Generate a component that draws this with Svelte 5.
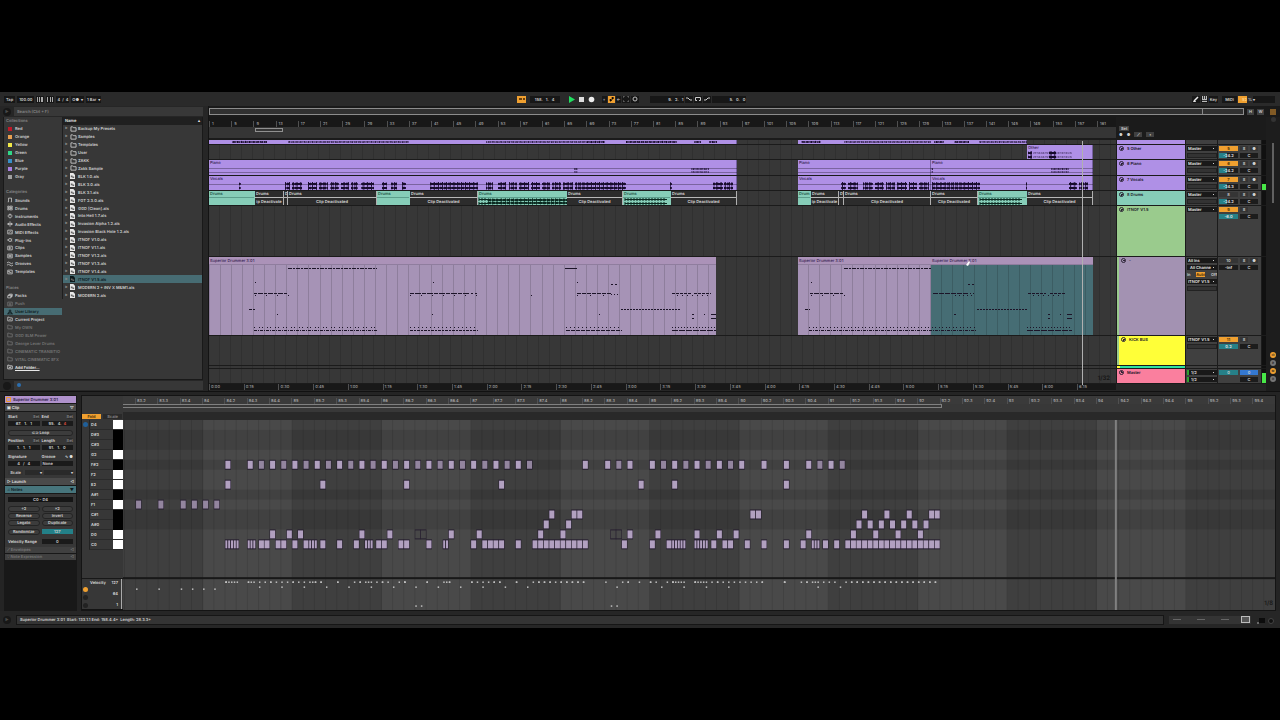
<script lang="ts">
  // Timeline geometry: the arrangement is 907 units wide, the note editor 1151
  const ARR = 907;
  const ROLL = 1151;
  const SIXTEENTH = 5.58;
  const BAR_84 = 80;

  const collections = [
    ['Red', '#c01828'], ['Orange', '#e8a050'], ['Yellow', '#f0e848'], ['Green', '#30d888'],
    ['Blue', '#3890c8'], ['Purple', '#a880e0'], ['Gray', '#a0a0a0']
  ];
  const categories = [
    ['Sounds', 'M2 6V1h4v5M2 6H1M6 6H5'],
    ['Drums', 'M1 1h2v2H1zM4 1h3v2H4zM1 4h2v2H1zM4 4h3v2H4z'],
    ['Instruments', 'M4 1a2.5 2.5 0 1 0 .1 0M4 1v3'],
    ['Audio Effects', 'M0 3.500h8M2 2v3M4 0v7M6 2v3'],
    ['MIDI Effects', 'M1 1h6v5H1zM2 5l3-3M5 4h1'],
    ['Plug-Ins', 'M2 3.500a2 2 0 1 0 4 0a2 2 0 1 0-4 0M0 3.500h2M6 2h1M6 5h1'],
    ['Clips', 'M1 1h6v5H1zM3 2v3l2-1.500z'],
    ['Samples', 'M1 1h6v5H1zM2 3h4M2 4h4'],
    ['Grooves', 'M0 2q2-2 4 0t4 0M0 5q2-2 4 0t4 0'],
    ['Templates', 'M1 1h6v5H1zM1 3h3M3 4h3']
  ];
  const FOLDER = 'M1 6V1h2l1 1h3v4z';
  const places = [
    { name: 'Packs', icon: 'M1 3h4v3H1zM2 3V2h4v3H5M3 2V1h4v3H6', kind: '' },
    { name: 'Push', icon: 'M1 1h6v5H1zM3 3h2v2H3z', kind: 'off' },
    { name: 'User Library', icon: 'M3 1h2v2H3zM2 6V4h4v2M0 6h8', kind: 'selected' },
    { name: 'Current Project', icon: FOLDER + 'M3 4h2', kind: '' },
    { name: 'My OWN', icon: FOLDER, kind: 'off' },
    { name: 'GGD SLM Power', icon: FOLDER, kind: 'off' },
    { name: 'George Lever Drums', icon: FOLDER, kind: 'off' },
    { name: 'CINEMATIC TRANSITIO', icon: FOLDER, kind: 'off' },
    { name: 'VITAL CINEMATIC SFX', icon: FOLDER, kind: 'off' },
    { name: 'Add Folder...', icon: FOLDER + 'M4 3v2M3 4h2', kind: 'link' }
  ];
  const files = [
    'Backup My Presets', 'Samples', 'Templates', 'User', 'ZAKK', 'Zakk Sample',
    'BLK 1.0.als', 'BLK 3.0.als', 'BLK 3.1.als', 'FGT 2.3.0.als', 'GGD [Clean].als',
    'Into Hell 1.7.als', 'Invasion Alpha 1.2.als', 'Invasion Black Hole 1.2.als',
    'ITNOF V1.0.als', 'ITNOF V1.1.als', 'ITNOF V1.2.als', 'ITNOF V1.3.als', 'ITNOF V1.4.als',
    'ITNOF V1.5.als', 'MODERN 2 + INV X M&M1.als', 'MODERN 2.als'
  ];

  const barMarks = Array.from({ length: 41 }, (_, i) => ({ text: 1 + i * 4, x: i * 22.2 }));
  const timeMarks = Array.from({ length: 26 }, (_, i) => ({
    text: `${Math.floor(i / 4)}:${String((i % 4) * 15).padStart(2, '0')}`,
    x: i * 34.72
  }));
  const beatMarks = Array.from({ length: 51 }, (_, i) => {
    const bar = 83 + Math.floor((i + 1) / 4);
    const beat = ((i + 1) % 4) + 1;
    return { text: beat === 1 ? `${bar}` : `${bar}.${beat}`, x: 12 + i * 22.33 };
  });

  // Clips are [start, end, label]
  const lilac = [[0, 528, ''], [589, 818, '']];
  const piano = [[0, 528, 'Piano'], [589, 722, 'Piano'], [722, 884, 'Piano']];
  const vocals = [[0, 528, 'Vocals'], [589, 722, 'Vocals'], [722, 884, 'Vocals']];
  const drums: [number, number, string][] = [
    [0, 46, 'on'], [46, 75, 'ip Deactivate'], [75, 79, ''], [79, 168, 'Clip Deactivated'],
    [168, 201, 'on'], [201, 269, 'Clip Deactivated'], [269, 358, 'on'],
    [358, 414, 'Clip Deactivated'], [414, 462, 'on'], [462, 528, 'Clip Deactivated'],
    [589, 602, 'on'], [602, 630, 'ip Deactivate'], [630, 635, ''],
    [635, 722, 'Clip Deactivated'], [722, 769, 'Clip Deactivated'], [769, 818, 'on'],
    [818, 884, 'Clip Deactivated']
  ];

  const tracks = [
    { id: 'top', name: '', h: 5, color: '#af90e6', clips: lilac, num: '', vol: '' },
    { id: 'other', name: '5 Other', h: 15, color: '#af90e6', clips: [[818, 884, 'Other']], num: '5', vol: '-24.2' },
    { id: 'piano', name: '6 Piano', h: 16, color: '#af90e6', clips: piano, num: '6', vol: '-24.2' },
    { id: 'vocals', name: '7 Vocals', h: 15, color: '#af90e6', clips: vocals, num: '7', vol: '-24.3' },
    { id: 'drums', name: '8 Drums', h: 15, color: '#86cdb8', clips: [], num: '8', vol: '-24.2' },
    { id: 'bus', name: 'ITNOF V1.5', h: 51, color: '#9acb8d', clips: [], num: '9', vol: '-6.0' },
    { id: 'midi', name: '-', h: 79, color: '#a392b2', clips: [], num: '10', vol: '-Inf' },
    { id: 'kick', name: 'KICK BUS', h: 30, color: '#ffff38', clips: [], num: '11', vol: '0.2' },
    { id: 'sliver', name: '', h: 3, color: '#30e0a0', clips: [], num: '', vol: '' },
    { id: 'master', name: 'Master', h: 15, color: '#fa7f9e', clips: [], num: '', vol: '' }
  ];

  // Deterministic jagged blocks that read as audio
  function wave(ranges: number[][], y: number, amp: number) {
    let d = '';
    for (const [a, b] of ranges) {
      for (let x = a; x < b; x += 1) {
        const v = amp * (0.65 + 0.35 * Math.sin(x * 2.3) * Math.cos(x * 0.7));
        d += `M${x + 0.5} ${(y - v).toFixed(1)}v${(v * 2).toFixed(1)}`;
      }
    }
    return d;
  }

  const vocalRanges = [
    [30, 32], [76, 81], [83, 93], [99, 108], [110, 119], [121, 130], [132, 140], [142, 149],
    [152, 165], [173, 178], [182, 188], [193, 197], [221, 269], [277, 284], [289, 297],
    [300, 308], [310, 320], [322, 331], [333, 341], [343, 352], [354, 364], [366, 417],
    [461, 463], [504, 514], [515, 524], [632, 637], [639, 649], [654, 664], [666, 675],
    [677, 686], [688, 698], [700, 708], [710, 720], [723, 771], [817, 818], [860, 868], [870, 879]
  ];
  const waves: Record<string, string> = {
    top: wave([[79, 200], [277, 378], [635, 722], [770, 818]], 2, 0.8) +
      wave([[23, 58], [378, 396], [417, 468], [485, 492], [500, 508], [592, 612], [725, 735], [745, 760]], 2, 1.1),
    other: wave([[819, 823], [840, 847]], 8, 2) + wave([[819, 823], [840, 847]], 12, 2) +
      wave([[824, 863]], 8, 0.4) + wave([[824, 863]], 12, 0.4),
    piano: wave([[365, 369], [482, 500], [722, 724], [842, 860]], 9, 0.8) +
      wave([[365, 369], [482, 500], [722, 724], [842, 860]], 12, 0.6),
    vocals: wave(vocalRanges, 8, 2) + wave(vocalRanges, 12, 1.9),
    drums: wave([[278, 358]], 9, 1.7) + wave([[278, 358]], 12, 1.7)
  };
  let hits = '';
  for (const [a, b] of [[270, 278], [416, 456], [771, 812]]) {
    for (let x = a; x < b; x += 3) hits += `M${x} 7v3M${x} 11v3M${x} 8.500h3M${x} 12.500h3`;
  }
  waves.drums += hits;

  // Lines between the two channels of a stereo clip
  const channelLines: Record<string, string> = {
    piano: 'M0 8.500H528M589 8.500H884M0 12.500H528M589 12.500H884',
    vocals: 'M0 8.500H528M589 8.500H884'
  };

  // MIDI miniatures: [from, to, y, dash]
  const midiLines: [number, number, number, string][] = [
    [79, 168, 11, '4 1 2 1'], [356, 368, 11, '4 0'], [46, 47, 25, ''], [224, 225, 25, ''], [368, 369, 25, ''],
    [402, 410, 27, '2 2'], [45, 79, 36, '3 1 5 1'], [201, 258, 36, '4 1 6 1'], [258, 268, 36, '2 2'],
    [368, 402, 36, '4 1'], [402, 410, 37, '1 2'], [46, 80, 38, '1 10'], [201, 269, 38, '1 10'],
    [368, 402, 38, '1 12'], [322, 323, 38, ''], [40, 46, 52, '3 1'], [412, 472, 52, '2 1'],
    [68, 69, 57, ''], [223, 224, 57, ''], [390, 391, 57, ''], [45, 168, 70, '1 4 1 2'],
    [45, 168, 73, '3 1 1 1'], [201, 269, 70, '1 3'], [201, 269, 73, '3 1 2 1'], [357, 413, 70, '1 3'],
    [357, 413, 73, '4 1'], [463, 482, 36, '3 1'], [485, 502, 36, '3 1'], [468, 500, 38, '1 4'],
    [483, 485, 57, ''], [495, 496, 57, ''], [502, 507, 57, ''], [483, 485, 61, ''], [502, 507, 61, ''],
    [463, 507, 70, '1 2'], [463, 507, 73, '6 1'],
    [596, 601, 52, '3 1'], [602, 603, 25, ''], [601, 635, 36, '3 1 5 1'], [602, 636, 38, '1 10'],
    [635, 722, 11, '4 1 2 1'], [600, 768, 70, '1 3 1 2'], [600, 768, 73, '3 1 1 1'],
    [724, 758, 36, '5 1'], [758, 766, 36, '1 2'], [759, 766, 27, '2 2'], [746, 764, 38, '1 3'],
    [745, 747, 57, ''], [768, 818, 52, '2 1'], [819, 837, 36, '3 1'], [841, 857, 36, '3 1'],
    [824, 854, 38, '1 4'], [839, 841, 57, ''], [851, 852, 57, ''], [858, 863, 57, ''],
    [839, 841, 61, ''], [858, 863, 61, ''], [818, 863, 70, '1 2'], [818, 863, 73, '6 1']
  ];
  const midiBars = Array.from({ length: 81 }, (_, i) => i * 11.1).filter((x) => x < 507 || (x > 589 && x < 884));

  const keys = [
    ['D4', 0], ['D#3', 1], ['C#3', 1], ['G2', 0], ['F#2', 1], ['F2', 0], ['E2', 0],
    ['A#1', 1], ['F1', 0], ['C#1', 1], ['A#0', 1], ['D0', 0], ['C0', 0]
  ] as [string, number][];

  function span(a: number, b: number, step = 1) {
    const out: number[] = [];
    for (let i = a; i <= b; i += step) out.push(i);
    return out;
  }

  // Note starts per row, in sixteenths counted from bar 84
  const rows: Record<number, number[]> = {
    4: [4, ...span(8, 58, 2), 68, 72, 74, 76, ...span(80, 96, 2), 100, 104, 108, 110, 112, 114],
    6: [4, 21, 36, 53, 78, 84, 104],
    8: [-12, -8, -4, -2, 0, 2],
    9: [62, 66, 67, 98, 99, 118, 122, 126, 130, 131],
    10: [61, 65, 117, 119, 121, 123, 125, 127, 129],
    11: [12, 15, 17, 28, 33, 38, 39, 44, 49, 60, 64, 73, 74, 76, 81, 88, 92, 95, 108, 116, 120, 124, 128],
    12: [10, 11, 13, 14, 16, 18, 21, 24, 27, 31, 32, 35, 36, 40, 48, 50, 51, 52, 53, 56,
      ...span(59, 68), 75, 80, 83, 91, 93, 94, 97, 100, 104, 107, 111, 113, ...span(115, 131)]
  };
  const short = [
    ...span(4, 6, 0.5), 8, 8.5, 9, 19, 19.5, 20, 29, 29.5, 30, 43, 43.5,
    ...span(84, 86, 0.5), ...span(88, 90, 0.5), 109, 109.5, 110
  ];
  const notes = [
    ...Object.entries(rows).flatMap(([row, list]) =>
      list.map((at) => {
        const r = Number(row);
        const ghost = r === 11 && [38, 39, 73, 74].includes(at);
        const soft = r === 8 || (r === 4 && at % 4 === 2);
        return { row: r, x: BAR_84 + at * SIXTEENTH, w: 5, fill: ghost ? '#484848' : soft ? '#93859f' : '#b1a0c0', vel: ghost ? 187 : r === 8 ? 170 : soft ? 168 : 163 };
      })
    ),
    ...short.map((at) => ({ row: 12, x: BAR_84 + at * SIXTEENTH, w: 2, fill: '#b1a0c0', vel: 163 }))
  ];
  const rollBars = Array.from({ length: 13 }, (_, i) => ({
    x: Math.max(0, BAR_84 + (i - 1) * 89.3),
    w: i === 0 ? 80 : 89.3,
    light: i % 2 === 1
  }));
  const gridLines = Array.from({ length: 103 }, (_, i) => 1.5 + i * 11.16);

  let playing = $state(true);
  let search = $state('');
  let selectedFile = $state('ITNOF V1.5.als');

  const pct = (v: number, total: number) => `${(v / total) * 100}%`;
</script>

<div class="screen">
  <main class="window">
    <header class="transport">
      <div class="group left">
        <button>Tap</button><span class="field">100.00</span>
        <button aria-label="Nudge down"><svg width="6" height="5"><path d="M0 0h1v5H0zM2 0h1v5H2zM4 0h2v5H4z" fill="#aaa" /></svg></button>
        <button aria-label="Nudge up"><svg width="6" height="5"><path d="M0 0h1v5H0zM3 0h1v5H3zM5 0h1v5H5z" fill="#aaa" /></svg></button>
        <span class="field">4 &nbsp;/&nbsp; 4</span>
        <button>O●&nbsp; ▾</button><button>1 Bar &nbsp;▾</button>
      </div>
      <div class="group centre">
        <button class="amber" aria-label="Follow"><svg width="7" height="6"><path d="M1 3h3M5 3h2" stroke="#402000" stroke-width="1.500" /></svg></button>
        <span class="field pos">158. &nbsp; 1. &nbsp; 4</span>
        <button class="big" aria-label="Play" onclick={() => (playing = !playing)}>
          <svg width="7" height="7"><path d="M1 0l6 3.500L1 7z" fill={playing ? '#20e060' : '#ddd'} /></svg>
        </button>
        <button class="big" aria-label="Stop"><svg width="7" height="7"><path d="M1 1h5v5H1z" fill="#ddd" /></svg></button>
        <button class="big" aria-label="Record"><svg width="7" height="7"><circle cx="3.500" cy="3.500" r="2.800" fill="#eee" /></svg></button>
        <button class="tools" aria-label="Overdub">+</button>
        <button class="amber arm" aria-label="Automation arm"><svg width="5" height="6"><path d="M1 5h1l2-3h1" stroke="#402000" fill="none" /><circle cx="1.500" cy="4" r="1" /><circle cx="3.500" cy="2" r="1" /></svg></button>
        <button aria-label="Re-enable">←</button>
        <button aria-label="Capture"><svg width="6" height="6"><path d="M0 2V0h2M4 0h2v2M6 4v2H4M2 6H0V4" stroke="#777" fill="none" /></svg></button>
        <button aria-label="Session record"><svg width="6" height="6"><circle cx="3" cy="3" r="2" stroke="#bbb" fill="none" /></svg></button>
        <span class="field loop">9. &nbsp; 2. &nbsp; 1</span>
        <button aria-label="Punch in"><svg width="6" height="6"><path d="M0 2h2l2 2h2" stroke="#ccc" fill="none" /></svg></button>
        <button aria-label="Loop"><svg width="6" height="6"><path d="M2 4.500H.500v-3h5v3H4" stroke="#ccc" fill="none" /></svg></button>
        <button aria-label="Punch out"><svg width="6" height="6"><path d="M0 4h2l2-2h2" stroke="#ccc" fill="none" /></svg></button>
        <span class="field len">5. &nbsp; 0. &nbsp; 0</span>
      </div>
      <div class="group right">
        <button aria-label="Draw mode"><svg width="6" height="6"><path d="M1 5l4-4M0 6h3" stroke="#eee" stroke-width="1.500" /></svg></button>
        <button aria-label="Computer keyboard"><svg width="5" height="6"><path d="M0 0h5v6H0z" fill="#bbb" /><path d="M1.500 0v3M3.500 0v3M0 4.500h5" stroke="#333" /></svg></button>
        <button>Key</button><button class="midimap">MIDI</button>
        <span class="cpu">52</span><span>%</span><span class="disk">▾</span>
      </div>
    </header>

    <div class="upper">
      <aside class="browser">
        <div class="searchrow">
          <button class="round" aria-label="Preview">▶</button>
          <input type="text" bind:value={search} aria-label="Search" placeholder="Search (Ctrl + F)" />
        </div>
        <div class="panes">
          <nav class="sidebar">
            <h2>Collections</h2>
            {#each collections as [name, color]}
              <button><i class="swatch" style="background:{color}"></i>{name}</button>
            {/each}
            <span></span>
            <h2>Categories</h2>
            {#each categories as [name, d]}
              <button><svg class="ico" viewBox="0 0 8 7"><path {d} /></svg>{name}</button>
            {/each}
            <span></span>
            <h2>Places</h2>
            {#each places as place}
              <button class={place.kind}><svg class="ico" viewBox="0 0 8 7"><path d={place.icon} /></svg>{place.name}</button>
            {/each}
          </nav>
          <div class="files">
            <div class="filehead"><span>Name</span><span class="sort">▴</span></div>
            {#each files as file, i}
              <button class:selected={file === selectedFile} onclick={() => (selectedFile = file)}>
                <span class="tri">▶</span>
                {#if i < 6}
                  <svg class="ico folder" viewBox="0 0 8 7"><path d={FOLDER} /></svg>
                {:else}
                  <svg class="doc" viewBox="0 0 6 7"><path d="M0 0h4l2 2v5H0z" /><path class="ink" d="M1 3h2v1h2v2H3V5H1z" /></svg>
                {/if}
                {file}
              </button>
            {/each}
          </div>
        </div>
        <div class="browserfoot"><span class="round"></span><div><i></i></div></div>
      </aside>

      <section class="arrangement">
        <div class="overview">
          <div class="map"><i></i></div>
          <button>H</button><button>W</button>
          <svg class="burger" width="6" height="6"><path d="M0 1h6M0 3h6M0 5h6" stroke="#e89a30" /></svg>
        </div>
        <div class="body">
          <div class="tracks">
            <div class="row heading">
              <div class="rulers">
                <div class="ruler">
                  {#each barMarks as m}<span style="left:{pct(m.x, ARR)}">{m.text}</span>{/each}
                </div>
                <div class="loopzone"><i></i></div>
              </div>
              <div class="setbox">
                <button>Set</button>
                <div><span>●</span><span>●</span><button aria-label="Automation mode">⟋</button><button aria-label="Lock">▪</button></div>
              </div>
            </div>

            {#each tracks as t}
              <div class="row {t.id}" style="height:{t.h}px">
                <div class="lane">
                  {#each t.clips as [a, b, label]}
                    <div class="clip" style="left:{pct(Number(a), ARR)};width:{pct(Number(b) - Number(a), ARR)};background:{t.color}">{label}</div>
                  {/each}
                  {#if t.id === 'drums'}
                    {#each drums as [a, b, label]}
                      <div class="clip drum" class:on={label === 'on'} style="left:{pct(a, ARR)};width:{pct(b - a, ARR)}">
                        <span>{b - a < 6 ? 'D' : b - a < 15 ? 'Drum' : 'Drums'}</span>
                        <p>{label === 'on' ? '' : label}</p>
                      </div>
                    {/each}
                  {/if}
                  {#if t.id === 'midi'}
                    <div class="clip part" style="left:0;width:{pct(507, ARR)}"><span>Superior Drummer 3:01</span></div>
                    <div class="clip part" style="left:{pct(589, ARR)};width:{pct(133, ARR)}"><span>Superior Drummer 3:01</span></div>
                    <div class="clip part picked" style="left:{pct(722, ARR)};width:{pct(162, ARR)}"><span>Superior Drummer 3:01</span></div>
                    <svg class="over crisp" viewBox="0 0 {ARR} 78" preserveAspectRatio="none">
                      {#each midiBars as x}<path d="M{x} 8V78" stroke="#000" stroke-opacity=".14" />{/each}
                      {#each midiLines as [a, b, y, dash]}
                        <path d="M{a} {y + 0.5}H{b}" stroke="#1c1428" stroke-dasharray={dash || null} />
                      {/each}
                    </svg>
                    <svg class="cursor" width="6" height="7"><path d="M1 5l3-4 1 1-2 4z" fill="#fff" /></svg>
                  {/if}
                  {#if waves[t.id]}
                    <svg class="over" viewBox="0 0 {ARR} {t.h - 1}" preserveAspectRatio="none">
                      <path d={channelLines[t.id] ?? ''} stroke="#000" stroke-opacity=".3" />
                      <path d={waves[t.id]} stroke={t.id === 'drums' ? '#0a2a20' : '#180c2c'} />
                    </svg>
                  {/if}
                  {#if t.id === 'master'}<em>1/32</em>{/if}
                </div>
                <div class="head" style="background:{t.color}">
                  {#if t.name}<button class="fold" aria-label="Fold {t.name}"></button>{t.name}{/if}
                </div>
                <div class="io">
                  {#if t.id === 'master'}
                    <select aria-label="Cue out"><option>1/2</option></select>
                    <select aria-label="Master out"><option>1/2</option></select>
                  {:else if t.id === 'midi'}
                    <select aria-label="MIDI from"><option>All Ins</option></select>
                    <select aria-label="MIDI channel"><option>&nbsp; All Channe</option></select>
                    <div class="monitor"><button>In</button><button class="amber">Auto</button><button>Off</button></div>
                    <select aria-label="MIDI to"><option>ITNOF V1.5</option></select>
                    <div class="blank"></div>
                  {:else if t.name}
                    <select aria-label="Output of {t.name}"><option>{t.id === 'kick' ? 'ITNOF V1.5' : 'Master'}</option></select>
                    {#if t.id !== 'bus'}<div class="blank"></div>{/if}
                  {/if}
                </div>
                <div class="mix">
                  {#if t.num}
                    <button class="num" class:amber={t.num !== '8' && t.num !== '10'}>{t.num}</button>
                    <button>S</button>
                    {#if t.id !== 'bus' && t.id !== 'kick'}<button aria-label="Arm {t.name}">●</button>{:else}<i></i>{/if}
                    <span class="vol" class:full={t.id === 'kick' || t.id === 'bus'} class:none={t.id === 'midi'}>{t.vol}</span>
                    <span class="pan">C</span>
                  {:else if t.id === 'master'}
                    <button class="num cue">0</button><button class="wide">0</button>
                    <i></i><span class="pan">C</span>
                  {/if}
                </div>
                <div class="meter"></div>
              </div>
            {/each}

            <div class="times">
              {#each timeMarks as m}<span style="left:{pct(m.x, ARR)}">{m.text}</span>{/each}
            </div>
            <div class="playline"><i></i></div>
          </div>
          <div class="gutter">
            <i class="info"></i>
            <i class="scroll"></i>
            <span class="dot lit">IO</span><span class="dot">R</span><span class="dot lit">M</span><span class="dot">D</span>
          </div>
        </div>
      </section>
    </div>

    <div class="lower">
      <aside class="clipview">
        <div class="cliptitle"><i></i>Superior Drummer 3:01</div>
        <h3><span>▣ Clip</span><span>▽</span></h3>
        <div class="props">
          <div class="pair"><span>Start <button>Set</button></span><span>End <button>Set</button></span></div>
          <div class="pair dark"><b>67. &nbsp; 1. &nbsp; 1</b><b>95. &nbsp; 4. &nbsp;<u>4</u></b></div>
          <button class="pill gap">⊂⊃ Loop</button>
          <div class="pair"><span>Position <button>Set</button></span><span>Length <button>Set</button></span></div>
          <div class="pair dark"><b>1. &nbsp; 1. &nbsp; 1</b><b>91. &nbsp; 1. &nbsp; 0</b></div>
          <div class="pair sig"><span>Signature</span><span>Groove <em>∿ ●</em></span></div>
          <div class="pair dark"><b>4 &nbsp; / &nbsp; 4</b><b class="l">None</b></div>
          <div class="scale"><button>Scale</button><b>▾</b><b>▾</b></div>
        </div>
        <h3><span>▷ Launch</span><span>◁</span></h3>
        <h3 class="teal"><span>♫ Notes</span><span>▼</span></h3>
        <div class="props notesbox">
          <b class="rangebox">C0 - D4</b>
          <div class="pair"><button class="pill">÷2</button><button class="pill">×2</button></div>
          <div class="pair"><button class="pill">Reverse</button><button class="pill">Invert</button></div>
          <div class="pair"><button class="pill">Legato</button><button class="pill">Duplicate</button></div>
          <div class="pair rand"><button class="pill">Randomize</button><b class="amount">127</b></div>
          <div class="pair vr"><span>Velocity Range</span><b>0</b></div>
        </div>
        <h3 class="off"><span>⟋ Envelopes</span><span>◁</span></h3>
        <h3 class="off"><span>∵ Note Expression</span><span>◁</span></h3>
      </aside>

      <section class="editor">
        <div class="keys">
          <div class="foldrow"><button class="amber">Fold</button><button>Scale</button></div>
          {#each keys as [name, black]}
            <div class="key"><span>{name}</span><i class:black></i></div>
          {/each}
          <div class="velhead"><span>Velocity</span><p><b>127</b><b>64</b><b>1</b></p></div>
          <i class="ear"></i>
          <i class="lane1"></i>
        </div>
        <div class="roll">
          <div class="beats">
            {#each beatMarks as m}<span style="left:{pct(m.x, ROLL)}">{m.text}</span>{/each}
          </div>
          <div class="looprail"><i></i></div>
          <div class="startrail"></div>
          <div class="scrub"></div>
          <svg class="notes" viewBox="0 0 {ROLL} 191" preserveAspectRatio="none">
            <rect width={ROLL} height="191" fill="#3f3f3f" />
            {#each rollBars as bar}
              <rect x={bar.x} width={bar.w} height="191" fill={bar.light ? '#494949' : '#3f3f3f'} />
            {/each}
            {#each keys as [, black], i}
              {#if black}<rect y={i * 10} width={ROLL} height="10" fill="#000" opacity=".1" />{/if}
            {/each}
            {#each gridLines as x}<path d="M{x} 0V191" stroke="#000" stroke-opacity=".1" />{/each}
            <rect y="158" width={ROLL} height="2" fill="#181818" />
            {#each notes as n}
              <rect x={n.x - 0.5} y={n.row * 10} width={n.w + 1} height="10" fill="#251d2e" />
              <rect x={n.x} y={n.row * 10 + 1} width={n.w} height="8" fill={n.fill} />
              <rect x={n.x} y={n.vel - 0.7} width="1.500" height="1.500" fill="#c0c0c0" />
            {/each}
            <rect x="991" width="2" height="191" fill="#808080" />
          </svg>
          <em>1/8</em>
        </div>
      </section>
    </div>

    <footer class="status">
      <span class="round">▶</span>
      <p>Superior Drummer 3:01 &nbsp;Start: 133.1.1 End: 158.4.4+ &nbsp;Length: 28.3.3+</p>
      <div class="chain"><i></i><i></i><i></i><i class="here"></i></div>
      <svg width="20" height="10"><path d="M3 3h6v5H3z" fill="#0c0c0c" /><path d="M1 8h2" stroke="#aaa" /><circle cx="15" cy="6" r="2.500" fill="#111" stroke="#444" /></svg>
    </footer>
  </main>
</div>

<style>
  :global(body) {
    background: #000;
  }

  .screen {
    display: flex;
    flex-direction: column;
    justify-content: center;
    min-height: 100vh;
    font: 600 4px/8px Inter, "Noto Sans", sans-serif;
    text-rendering: geometricPrecision;
    color: #d0d0d0;
  }

  .window {
    background: #272727;
    overflow: hidden;
  }

  button, input, select {
    font: inherit;
    color: inherit;
    background: none;
    border: 0;
    border-radius: 0;
    margin: 0;
    padding: 0;
    min-width: 0;
    appearance: none;
    text-align: inherit;
    text-rendering: inherit;
    white-space: nowrap;
  }

  h2, h3, p {
    margin: 0;
    font: inherit;
  }

  i, em, b, u {
    display: block;
    font-style: normal;
    font-weight: inherit;
    text-decoration: none;
  }

  svg {
    display: block;
  }

  .amber {
    background: #f0a030 !important;
    color: #3a2400 !important;
  }

  /* transport */
  .transport {
    display: grid;
    grid-template-columns: 1fr auto 1fr;
    align-items: center;
    height: 14px;
    padding: 0 5px 0 4px;
    background: #2a2a2a;
  }

  .group {
    display: flex;
    align-items: center;
    gap: 1px;
    line-height: 7px;
  }

  .group button, .group .field {
    display: flex;
    align-items: center;
    justify-content: center;
    height: 7px;
    padding: 0 1px;
    background: #171717;
  }

  .left {
    gap: 2px;
  }

  .left > :first-child, .left > :nth-child(2) {
    padding: 0 2px;
  }

  .centre {
    padding-right: 16px;
  }

  .centre .pos {
    width: 28px;
    margin: 0 6px 0 3px;
  }

  .centre .big {
    background: none;
  }

  .centre .tools {
    width: 5px;
    margin-left: 5px;
  }

  .centre .loop {
    width: 32px;
    margin-left: 10px;
    justify-content: flex-end;
  }

  .centre .len {
    width: 32px;
    justify-content: flex-end;
  }

  .right {
    justify-content: flex-end;
  }

  .right .midimap {
    margin-left: 3px;
    padding: 0 3px;
  }

  .cpu {
    width: 9px;
    text-align: right;
    background: #f0a030;
    color: #ffd890;
  }

  .disk {
    width: 22px;
    background: #171717;
    text-align: left;
  }

  .round {
    display: block;
    width: 8px;
    height: 8px;
    line-height: 8px;
    border-radius: 50%;
    background: #181818;
    color: #4a4a4a;
    text-align: center;
    flex: none;
  }

  /* browser */
  .upper {
    display: flex;
    height: 285px;
    background: #262626;
    border-bottom: 1px solid #111;
  }

  .browser {
    width: 200px;
    margin: 0 5px 0 3px;
    flex: none;
    display: flex;
    flex-direction: column;
  }

  .searchrow, .browserfoot {
    display: flex;
    gap: 3px;
    align-items: center;
    height: 11px;
  }

  .searchrow input {
    flex: 1;
    height: 9px;
    padding-left: 3px;
    background: #383838;
    color: #888;
  }

  .searchrow input::placeholder {
    color: #888;
  }

  .panes {
    display: flex;
    flex: 1;
    border: 1px solid #191919;
    border-top: 0;
    background: #373737;
  }

  .sidebar {
    width: 58px;
    height: 254px;
    flex: none;
    display: grid;
    grid-auto-rows: 1fr;
    overflow: hidden;
  }

  .sidebar h2 {
    padding-left: 2px;
    color: #858585;
  }

  .sidebar button {
    display: flex;
    align-items: center;
    gap: 2px;
    padding-left: 3px;
    min-height: 0;
    overflow: hidden;
    line-height: 7px;
  }

  .ico {
    width: 6px;
    height: 6px;
    flex: none;
    fill: none;
    stroke: currentColor;
  }

  .swatch {
    width: 4px;
    height: 4px;
    margin: 0 1px;
  }

  .sidebar .off {
    color: #767676;
  }

  .sidebar .selected, .files .selected {
    background: #476c73;
    color: #0b181b;
  }

  .sidebar .link {
    text-decoration: underline;
    color: #e8e8e8;
  }

  .files {
    flex: 1;
    height: 182px;
    border-left: 1px solid #1e1e1e;
    display: grid;
    grid-auto-rows: 1fr;
  }

  .filehead {
    display: flex;
    justify-content: space-between;
    padding: 0 2px;
    background: #202020;
    color: #e8e8e8;
  }

  .files button {
    display: flex;
    align-items: center;
    min-height: 0;
    line-height: 7px;
    padding-left: 2px;
  }

  .tri {
    width: 5px;
    font-size: 3px;
    color: #888;
  }

  .folder {
    width: 7px;
    margin-right: 1px;
  }

  .doc {
    width: 5px;
    height: 6px;
    margin-right: 3px;
    fill: #e8e8e8;
  }

  .doc .ink {
    fill: #666;
  }

  .selected .doc {
    fill: #0b181b;
  }

  .browserfoot div {
    flex: 1;
    height: 9px;
    background: #373737;
  }

  .browserfoot i {
    width: 4px;
    height: 4px;
    margin: 2px 3px;
    border-radius: 50%;
    background: #2c6fb0;
  }

  /* arrangement */
  .arrangement {
    flex: 1;
    min-width: 0;
    display: flex;
    flex-direction: column;
    border-left: 1px solid #141414;
  }

  .overview {
    display: flex;
    align-items: center;
    gap: 3px;
    height: 11px;
    padding-right: 4px;
    background: #1a1a1a;
  }

  .map {
    flex: 1;
    height: 5px;
    border: 1px solid #8c8c8c;
    background: #303030;
  }

  .map i {
    width: 96%;
    height: 5px;
    border-right: 1px solid #888;
  }

  .overview button {
    width: 7px;
    height: 6px;
    line-height: 6px;
    text-align: center;
    background: #404040;
  }

  .burger {
    margin-left: 3px;
  }

  .body {
    display: flex;
    flex: 1;
  }

  .tracks {
    position: relative;
    flex: 1;
    min-width: 0;
  }

  .row {
    display: grid;
    grid-template-columns: 1fr 68px 31px 43px 4px;
    column-gap: 1px;
    background: #1b1b1b;
  }

  .row > * {
    margin-bottom: 1px;
    min-height: 0;
    overflow: hidden;
  }

  .rulers {
    height: 21px;
    background: #353535;
    border-bottom: 1px solid #1b1b1b;
  }

  .ruler, .times, .beats {
    position: relative;
    height: 10px;
    background: #181818;
    color: #a0a0a0;
    font-weight: 500;
  }

  .ruler span, .times span, .beats span {
    position: absolute;
    top: 4px;
    padding-left: 2px;
    line-height: 6px;
    border-left: 1px solid #505050;
  }

  .loopzone i {
    width: 26px;
    height: 2px;
    margin: 1px 0 0 5.100%;
    border: 1px solid #909090;
  }

  .setbox {
    grid-column: 2 / -1;
    padding: 9px 0 0 2px;
    line-height: 5px;
    background: #1b1b1b;
  }

  .setbox button {
    display: block;
    padding: 0 2px;
    background: #404040;
    text-align: center;
    line-height: 5px;
  }

  .setbox div {
    display: flex;
    gap: 4px;
    margin-top: 1px;
  }

  .setbox div button {
    width: 8px;
  }

  .lane {
    position: relative;
    background: #373737 repeating-linear-gradient(90deg, transparent 0 10px, #303030 10px 11px);
  }

  .clip {
    position: absolute;
    top: 0;
    bottom: 0;
    box-sizing: border-box;
    padding-left: 1px;
    line-height: 6px;
    font-weight: 500;
    color: #35204f;
    border-right: 1px solid #7460a0;
    white-space: nowrap;
    overflow: hidden;
  }

  .over {
    position: absolute;
    inset: 0;
    width: 100%;
    height: 100%;
  }

  .crisp {
    shape-rendering: crispEdges;
  }

  .drum {
    padding: 0;
    background: #2c2c2c;
    color: #ddd;
    border-right: 1px solid #b0b0b0;
    text-align: center;
    line-height: 7px;
    font-weight: 600;
  }

  .drum span {
    display: block;
    height: 6px;
    line-height: 6px;
    padding-left: 1px;
    text-align: left;
    border-bottom: 1px solid #b8b8b8;
  }

  .drum.on {
    background: #86cdb8;
    color: #205545;
    border-color: #86cdb8;
  }

  .drum.on span {
    border-color: #5c9e8c;
  }

  .part {
    padding: 0;
    background: #a693b6;
    border: 0;
  }

  .part span {
    display: block;
    height: 7px;
    padding-left: 1px;
    line-height: 7px;
    background: #ab92b8;
    border-bottom: 1px solid #8f7d9e;
  }

  .picked {
    background: #466d74;
  }

  .cursor {
    position: absolute;
    left: 83.300%;
    top: 3px;
  }

  .master em {
    position: absolute;
    right: 6px;
    bottom: 0;
    color: #151515;
    font-size: 6px;
  }

  .head {
    display: flex;
    align-items: flex-start;
    gap: 3px;
    padding-left: 2px;
    line-height: 7px;
    color: #17121e;
    font-weight: 600;
  }

  .midi .head, .kick .head {
    border-left: 2px solid #9acb8d;
  }

  .sliver .head {
    border-left: 3px solid #ffff38;
  }

  .fold {
    flex: none;
    width: 5px;
    height: 5px;
    margin-top: 1px;
    box-sizing: border-box;
    border: 1px solid #2a2233;
    border-radius: 50%;
    background: radial-gradient(#2a2233 1px, transparent 1px);
  }

  .io {
    padding: 1px 0 0 1px;
    background: #404040;
    display: flex;
    flex-direction: column;
    gap: 2px;
  }

  .io select {
    flex: none;
    height: 5px;
    line-height: 5px;
    padding-left: 1px;
    color: #e4e4e4;
    background: #191919 linear-gradient(135deg, #ccc 50%, transparent 50%) no-repeat 26px 2px / 2px 2px;
  }

  .master .io select {
    padding-left: 4px;
    box-shadow: inset 2px 0 0 #30a030;
  }

  .blank {
    flex: none;
    height: 3px;
    border: 1px solid #222;
    background: #333;
  }

  .monitor {
    display: flex;
    justify-content: space-between;
    height: 5px;
    line-height: 5px;
  }

  .monitor button {
    line-height: 5px;
  }

  .mix {
    display: grid;
    grid-template-columns: 19px 8px 8px;
    grid-auto-rows: 5px;
    gap: 2px;
    padding: 1px 0 0 1px;
    justify-content: start;
    background: #404040;
    line-height: 5px;
    text-align: center;
  }

  .mix button {
    line-height: 5px;
    text-align: center;
    background: #353535;
  }

  .vol {
    background: linear-gradient(90deg, #268088 40%, #1c1c1c 40%);
    color: #e8e8e8;
  }

  .vol.full {
    background: #268088;
  }

  .vol.none {
    background: #1c1c1c;
  }

  .mix .pan {
    grid-column: 2 / 4;
    background: #1c1c1c;
  }

  .mix .cue {
    background: #268088;
  }

  .mix .wide {
    grid-column: 2 / 4;
    background: #3478d0;
  }

  .meter {
    background: #101010;
  }

  .vocals .meter {
    background: linear-gradient(#101010 55%, #48e848 55%);
  }

  .master .meter {
    background: linear-gradient(#101010 30%, #48e848 30%);
  }

  .times {
    height: 6px;
    margin-right: 150px;
  }

  .times span {
    top: 0;
    line-height: 6px;
    padding-left: 1px;
  }

  .playline {
    position: absolute;
    inset: 24px 150px 6px 0;
    pointer-events: none;
  }

  .playline i {
    width: 1px;
    height: 100%;
    margin-left: 96.300%;
    background: #b0b0b0;
  }

  .gutter {
    width: 14px;
    flex: none;
    display: flex;
    flex-direction: column;
    align-items: center;
    gap: 1px;
    background: #1d1d1d;
  }

  .info {
    width: 5px;
    height: 5px;
    margin-bottom: 20px;
    border-radius: 50%;
    background: #333;
  }

  .scroll {
    width: 2px;
    height: 60px;
    margin-bottom: auto;
    background: #606060;
  }

  .dot {
    width: 6px;
    height: 6px;
    margin-bottom: 1px;
    border-radius: 50%;
    background: #777;
    color: #222;
    font-size: 3px;
    line-height: 6px;
    text-align: center;
  }

  .dot.lit {
    background: #f0a030;
  }

  .dot:last-child {
    margin-bottom: 9px;
  }

  /* clip panel */
  .lower {
    display: flex;
    gap: 4px;
    padding: 3px 4px 0;
    background: #242424;
  }

  .clipview {
    width: 73px;
    flex: none;
    background: #181818;
    line-height: 7px;
  }

  .cliptitle {
    display: flex;
    align-items: center;
    gap: 2px;
    height: 7px;
    margin: 1px 1px 1px;
    padding-left: 1px;
    background: #b092cc;
    color: #28183c;
  }

  .cliptitle i {
    width: 3px;
    height: 3px;
    border: 1px solid #e89a30;
  }

  .clipview h3 {
    display: flex;
    justify-content: space-between;
    height: 7px;
    margin: 0 1px 1px;
    padding: 0 2px;
    background: #4a4a4a;
    color: #e0e0e0;
  }

  .clipview .teal {
    background: #47757c;
    color: #0c1a1d;
  }

  .clipview .off {
    background: #404040;
    color: #777;
    margin-bottom: 0;
    border-bottom: 1px solid #181818;
    height: 6px;
    line-height: 6px;
  }

  .props {
    display: flex;
    flex-direction: column;
    box-sizing: border-box;
    height: 66px;
    margin: 0 1px;
    padding: 1px 3px;
    background: #373737;
  }

  .pair {
    display: grid;
    grid-template-columns: 1fr 1fr;
    column-gap: 2px;
    height: 7px;
  }

  .pair span {
    display: flex;
    justify-content: space-between;
    color: #ddd;
    white-space: nowrap;
  }

  .pair span button {
    height: 5px;
    line-height: 5px;
    margin-top: 1px;
    color: #888;
    background: #2c2c2c;
    border-radius: 2px;
  }

  .pair b {
    height: 5px;
    margin-top: 1px;
    line-height: 5px;
    background: #1a1a1a;
    text-align: center;
  }

  .pair .l {
    text-align: left;
    padding-left: 1px;
  }

  .pair u {
    display: inline;
    color: #e05040;
  }

  .pill {
    height: 6px;
    line-height: 4px;
    box-sizing: border-box;
    border: 1px solid #242424;
    border-radius: 3px;
    background: #3c3c3c;
    text-align: center;
  }

  .gap {
    margin: 3px 0 1px;
    height: 6px;
  }

  .sig {
    margin-top: 2px;
  }

  .scale {
    display: grid;
    grid-template-columns: 15px 17px 1fr;
    gap: 2px;
    height: 5px;
    margin-top: 3px;
    line-height: 5px;
    text-align: right;
  }

  .scale button {
    line-height: 5px;
    text-align: center;
    background: #333;
  }

  .scale b {
    background: #2a2a2a;
  }

  .notesbox {
    height: 53px;
  }

  .rangebox {
    height: 5px;
    margin: 2px 0 4px;
    line-height: 5px;
    background: #151515;
    text-align: center;
  }

  .rand {
    margin-top: 2px;
  }

  .pair .amount {
    margin-top: 0;
    background: #238088;
  }

  .vr {
    margin-top: 2px;
  }

  /* note editor */
  .editor {
    flex: 1;
    min-width: 0;
    display: flex;
    border: 1px solid #141414;
    border-bottom-width: 2px;
    box-sizing: border-box;
    height: 216px;
  }

  .keys {
    position: relative;
    width: 41px;
    flex: none;
    background: #373737;
  }

  .foldrow {
    display: grid;
    grid-template-columns: 1fr 1fr;
    gap: 2px;
    box-sizing: border-box;
    height: 24px;
    padding: 18px 1px 1px 0;
  }

  .foldrow button {
    height: 5px;
    line-height: 5px;
    text-align: center;
    background: #2a2a2a;
    color: #888;
  }

  .key {
    display: flex;
    justify-content: space-between;
    height: 9px;
    margin-left: 7px;
    padding-left: 1px;
    line-height: 9px;
    border-bottom: 1px solid #2a2a2a;
    border-left: 1px solid #222;
    color: #ddd;
  }

  .key i {
    width: 10px;
    height: 9px;
    background: #fff;
  }

  .key .black {
    height: 10px;
    background: #000;
  }

  .velhead {
    display: flex;
    justify-content: space-between;
    height: 30px;
    margin-top: 28px;
    padding: 0 1px 0 8px;
    border-top: 1px solid #181818;
    color: #ddd;
  }

  .velhead p {
    display: flex;
    flex-direction: column;
    justify-content: space-between;
    padding-right: 3px;
    border-right: 1px solid #aaa;
    text-align: right;
  }

  .ear, .lane1 {
    position: absolute;
    left: 1px;
    width: 5px;
    height: 5px;
    border-radius: 50%;
  }

  .ear {
    top: 26px;
    background: #205f98;
  }

  .lane1 {
    top: 191px;
    background: #f0a030;
    box-shadow: 0 8px 0 #222, 0 16px 0 #222;
  }

  .roll {
    position: relative;
    flex: 1;
    min-width: 0;
  }

  .beats {
    height: 8px;
    background: #3a3a3a;
    overflow: hidden;
  }

  .beats span {
    top: 2px;
    padding-left: 1px;
    color: #b0b0b0;
  }

  .looprail {
    height: 4px;
    background: #383838;
  }

  .looprail i {
    width: 71%;
    height: 2px;
    border: solid #808080;
    border-width: 1px 1px 1px 0;
  }

  .startrail {
    height: 4px;
    background: #383838;
  }

  .scrub {
    height: 8px;
    background: #292929;
  }

  .notes {
    width: 100%;
    height: 190px;
  }

  .roll em {
    position: absolute;
    right: 2px;
    bottom: 1px;
    color: #181818;
    font-size: 6px;
  }

  /* status bar */
  .status {
    display: flex;
    align-items: center;
    gap: 5px;
    height: 17px;
    padding: 0 4px 0 3px;
    background: #262626;
  }

  .status p {
    flex: 1;
    height: 8px;
    padding-left: 3px;
    background: #343434;
    border: 1px solid #161616;
    color: #d0d0d0;
  }

  .chain {
    display: flex;
    align-items: center;
    gap: 12px;
    width: 82px;
    height: 8px;
    background: #343434;
  }

  .chain i {
    width: 8px;
    height: 1px;
    margin-left: 4px;
    background: #666;
  }

  .chain .here {
    width: 7px;
    height: 5px;
    margin: 0;
    border: 1px solid #bbb;
    background: #555;
  }
</style>
